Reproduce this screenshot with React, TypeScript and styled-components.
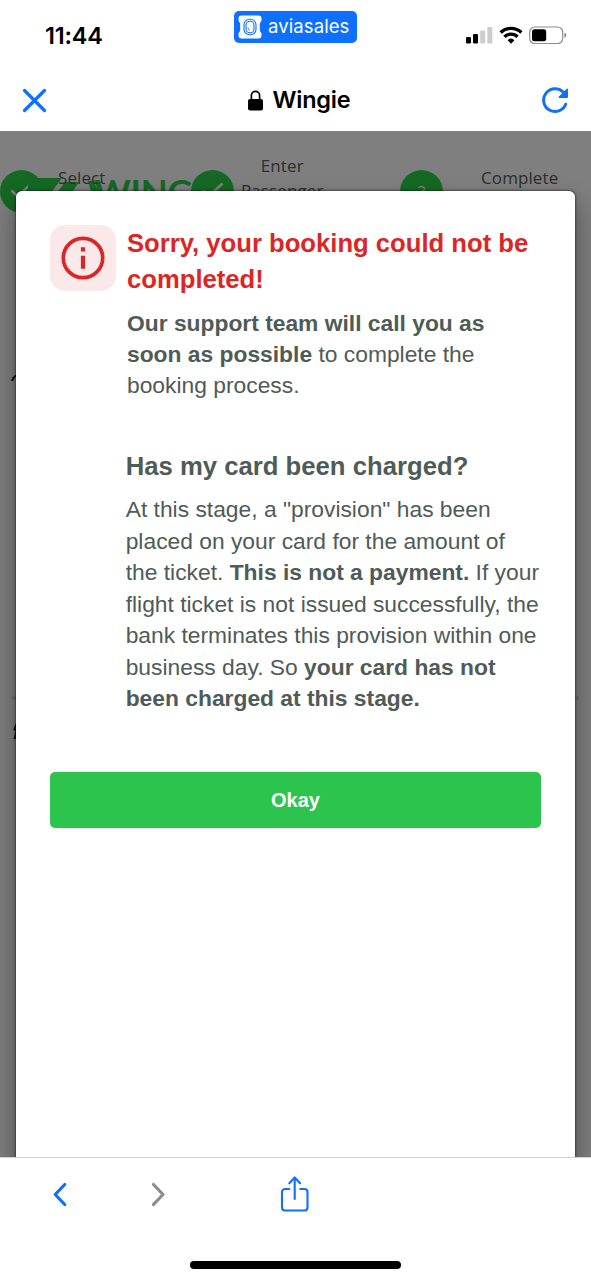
import React from 'react';
import styled, { createGlobalStyle } from 'styled-components';

const BLUE = '#0f6fff';

const GlobalStyle = createGlobalStyle`
  *, *::before, *::after { box-sizing: border-box; }
  body { margin: 0; background: #fff; }
  h1, h2, p { margin: 0; }
  button { border: 0; padding: 0; background: none; font: inherit; color: inherit; }
  svg { display: block; flex: none; }
`;

const Screen = styled.div`
  display: flex;
  flex-direction: column;
  width: 591px;
  height: 1280px;
  overflow: hidden;
  background: #fff;
  font-family: 'Liberation Sans', Arial, sans-serif;
`;

const StatusBar = styled.header`
  display: grid;
  grid-template-columns: 1fr 123px 1fr;
  height: 70px;
`;

const Clock = styled.time`
  padding: 21px 0 0 45px;
  font: 600 23.5px/29px Inter, sans-serif;
  letter-spacing: -0.2px;
  color: #000;
`;

const Badge = styled.div`
  display: flex;
  align-items: center;
  gap: 6px;
  height: 32px;
  margin-top: 11px;
  padding: 0 0 0 4px;
  border-radius: 5px;
  background: ${BLUE};
  color: #fff;
`;

const BadgeName = styled.span`
  font: 400 18.5px/24px Inter, sans-serif;
  letter-spacing: 0.1px;
  white-space: nowrap;
  margin-top: -3px;
`;

const Indicators = styled.div`
  display: flex;
  justify-content: flex-end;
  gap: 6px;
  padding: 26px 24px 0 0;
`;

const NavBar = styled.nav`
  display: flex;
  align-items: center;
  justify-content: space-between;
  height: 61px;
  padding: 0 22px 1px 22px;
`;

const NavTitle = styled.div`
  display: flex;
  align-items: center;
  gap: 9px;
  padding-left: 11px;
  font: 600 23.5px/30px Inter, sans-serif;
  letter-spacing: -0.2px;
  color: #000;
`;

const WebView = styled.main`
  position: relative;
  height: 1026px;
  overflow: hidden;
  background: #fff;
`;

const Steps = styled.div`
  display: grid;
  grid-template-columns: 191px 209px 191px;
  padding-top: 39px;
`;

const Step = styled.div<{ $gap: number; $raised?: boolean }>`
  display: flex;
  align-items: flex-start;
  gap: ${(p) => p.$gap}px;
  span {
    position: relative;
    z-index: 1;
    font: 400 17px/25px 'Open Sans', sans-serif;
    text-align: center;
    color: #5c5c5c;
    letter-spacing: 0.1px;
    margin-top: ${(p) => (p.$raised ? -17 : -5)}px;
  }
`;

const StepDot = styled.div`
  display: flex;
  align-items: center;
  justify-content: center;
  width: 43px;
  height: 43px;
  border-radius: 50%;
  background: #2bd349;
  color: #fff;
  font: 400 16px/20px 'Open Sans', sans-serif;
`;

const Brand = styled.div`
  position: absolute;
  left: 28px;
  top: 46px;
  color: #2bd349;
`;

const PageTrace = styled.svg`
  position: absolute;
  left: 0;
  top: 230px;
`;

const Backdrop = styled.div`
  position: absolute;
  z-index: 2;
  inset: 0;
  display: flex;
  padding: 60px 16px 0 16px;
  background: rgba(0, 0, 0, 0.5);
`;

const Dialog = styled.section`
  width: 559px;
  height: 1000px;
  padding: 34px 34px 0;
  border-radius: 6px;
  background: #fff;
  box-shadow: 0 0 2px 1px rgba(0, 0, 0, 0.4), 0 14px 24px 4px rgba(0, 0, 0, 0.3);
`;

const Message = styled.div`
  display: grid;
  grid-template-columns: 66px 1fr;
  column-gap: 11px;
`;

const AlertTile = styled.div`
  display: flex;
  align-items: center;
  justify-content: center;
  height: 66px;
  border-radius: 15px;
  background: #fbe9e9;
`;

const Title = styled.h1`
  padding-top: 1px;
  font-size: 25.65px;
  line-height: 35.5px;
  font-weight: 700;
  color: #dc2626;
  white-space: nowrap;
`;

const Text = styled.p`
  font-size: 22.82px;
  line-height: 31.45px;
  color: #4f5b57;
  white-space: nowrap;
`;

const Lead = styled(Text)`
  margin-top: 10.5px;
`;

const Details = styled.div`
  margin: 46.5px 0 0 75.7px;
`;

const Subtitle = styled.h2`
  margin-bottom: 10px;
  font-size: 25.7px;
  line-height: 36px;
  font-weight: 700;
  color: #4f5b57;
  white-space: nowrap;
`;

const OkayButton = styled.button`
  display: block;
  width: 491px;
  height: 56px;
  margin-top: 57px;
  border-radius: 5px;
  background: #2dc44d;
  color: #fff;
  font: 700 20px/56px 'Liberation Sans', Arial, sans-serif;
`;

const Toolbar = styled.footer`
  display: flex;
  flex-direction: column;
  align-items: center;
  justify-content: space-between;
  height: 123px;
  padding-bottom: 11px;
  border-top: 1px solid #cfcfcf;
`;

const Actions = styled.div`
  display: grid;
  grid-template-columns: 120px 76px 197px 198px;
  width: 591px;
  padding-top: 18px;
  align-items: center;
  justify-items: center;
`;

const HomeIndicator = styled.div`
  width: 211px;
  height: 8px;
  border-radius: 4px;
  background: #000;
`;

const TicketIcon = () => (
  <svg width="24" height="24" viewBox="0 0 24 24">
    <path d="M3.500.5h17a3 3 0 0 1 3 3v1.700c0 1.400-1.700 2-1.700 3.800v6c0 1.800 1.700 2.400 1.700 3.800v1.700a3 3 0 0 1-3 3h-17a3 3 0 0 1-3-3v-1.700c0-1.400 1.700-2 1.700-3.800V9c0-1.800-1.700-2.400-1.700-3.800V3.500a3 3 0 0 1 3-3z" fill="#fff" />
    <rect x="6" y="4.200" width="12" height="15.600" rx="5.500" fill="none" stroke={BLUE} strokeWidth="1.100" />
    <rect x="8" y="6.300" width="8" height="11.400" rx="3.800" fill="none" stroke={BLUE} strokeWidth="1.100" />
    <path d="M10 12.500v1.200l1.800 1.700" fill="none" stroke={BLUE} strokeWidth="1" />
  </svg>
);

const SignalIcon = () => (
  <svg width="27" height="18" viewBox="0 0 27 18">
    <rect x="0" y="11" width="5" height="6.500" rx="1.200" fill="#000" />
    <rect x="7" y="8" width="5" height="9.500" rx="1.200" fill="#000" />
    <rect x="14.200" y="4.500" width="5" height="13" rx="1.200" fill="#ccc" />
    <rect x="21.300" y="1" width="5" height="16.500" rx="1.200" fill="#ccc" />
  </svg>
);

const WifiIcon = () => (
  <svg width="24" height="18" viewBox="0 0 24 18">
    <g fill="none" stroke="#000" strokeWidth="3.300">
      <path d="M1.600 6.500a15 15 0 0 1 20.800 0" />
      <path d="M5.400 10.800a9.500 9.500 0 0 1 13.200 0" />
    </g>
    <path d="M8.600 14.200a5 5 0 0 1 6.800 0L12 17.700z" fill="#000" />
  </svg>
);

const BatteryIcon = () => (
  <svg width="38" height="19" viewBox="0 0 38 19">
    <rect x=".7" y="1" width="33" height="16.500" rx="5" fill="none" stroke="#8e8e8e" strokeWidth="1.200" />
    <rect x="3" y="3.200" width="14.200" height="12" rx="2.500" fill="#000" />
    <path d="M35.500 6.800c2.200.9 2.200 4.200 0 5z" fill="#777" />
  </svg>
);

const CloseIcon = () => (
  <svg width="25" height="25" viewBox="0 0 25 25" fill="none" stroke={BLUE} strokeWidth="3.200" strokeLinecap="round">
    <path d="M2.500 2.500l20 20M22.500 2.500l-20 20" />
  </svg>
);

const LockIcon = () => (
  <svg width="15" height="21" viewBox="0 0 15 21">
    <rect x="0" y="9" width="15" height="11.500" rx="2" fill="#000" />
    <path d="M3.400 10V5.400a4.100 4.100 0 0 1 8.200 0V10" fill="none" stroke="#000" strokeWidth="1.700" />
  </svg>
);

const ReloadIcon = () => (
  <svg width="28" height="28" viewBox="0 0 28 28">
    <path d="M24.700 18.200A11.400 11.400 0 1 1 22.600 6.600" fill="none" stroke={BLUE} strokeWidth="3" strokeLinecap="round" />
    <path d="M27 3.300v7.800q0 .9-.9.900h-7.700q-1.500-.3-.5-1.500l7.600-7.600q1.100-.9 1.500.4z" fill={BLUE} />
  </svg>
);

const CheckIcon = () => (
  <svg width="24" height="20" viewBox="0 0 24 20" fill="none" stroke="#fff" strokeWidth="2.500">
    <path d="M1.500 8.500l6 6L21.500 1.500" />
  </svg>
);

const InfoIcon = () => (
  <svg width="44" height="44" viewBox="0 0 44 44">
    <circle cx="22" cy="22" r="19.700" fill="none" stroke="#dc2626" strokeWidth="3.700" />
    <path d="M19.900 11.300h4.200v4.200h-4.200zM19.900 19.700h4.200v13h-4.200z" fill="#dc2626" />
  </svg>
);

const ChevronIcon = ({ forward }: { forward?: boolean }) => (
  <svg width="16" height="28" viewBox="0 0 16 28" fill="none" stroke={forward ? '#8c8c8c' : BLUE} strokeWidth="3.200" strokeLinecap="round" strokeLinejoin="round">
    <path d={forward ? 'M3.500 2.500L13 12.500l-9.500 10' : 'M12.700 2.500L3.200 12.500l9.500 10'} />
  </svg>
);

const ShareIcon = () => (
  <svg width="30" height="40" viewBox="0 0 30 40" fill="none" stroke={BLUE} strokeWidth="2.100" strokeLinecap="round" strokeLinejoin="round">
    <path d="M9.300 13H5a3 3 0 0 0-3 3v15.500a3 3 0 0 0 3 3h19.500a3 3 0 0 0 3-3V16a3 3 0 0 0-3-3H20.200M14.700 23V1.500M9.300 7.300L14.700 1.500l5.400 5.800" />
  </svg>
);

const BrandLogo = () => (
  <svg width="170" height="34" viewBox="0 0 170 34" fill="currentColor">
    <path d="M0 1h34L22 17H0z" />
    <path d="M37 5h14L41 20H26z" />
    <path d="M60 4h5l8 14h-9z" />
    <text x="66" y="28" fontFamily="Lato, sans-serif" fontWeight="700" fontSize="35" textLength="99">WING</text>
  </svg>
);

export default function App() {
  return (
    <>
      <GlobalStyle />
      <Screen>
        <StatusBar>
          <Clock>11:44</Clock>
          <Badge>
            <TicketIcon />
            <BadgeName>aviasales</BadgeName>
          </Badge>
          <Indicators>
            <SignalIcon />
            <WifiIcon />
            <BatteryIcon />
          </Indicators>
        </StatusBar>
        <NavBar>
          <button aria-label="Close"><CloseIcon /></button>
          <NavTitle><LockIcon />Wingie</NavTitle>
          <button aria-label="Reload"><ReloadIcon /></button>
        </NavBar>
        <WebView>
          <Steps>
            <Step $gap={15}><StepDot><CheckIcon /></StepDot><span>Select</span></Step>
            <Step $gap={7} $raised><StepDot><CheckIcon /></StepDot><span>Enter<br />Passenger</span></Step>
            <Step $gap={38}><StepDot>3</StepDot><span>Complete</span></Step>
          </Steps>
          <Brand><BrandLogo /></Brand>
          <PageTrace width="591" height="390" fill="none">
            <path d="M12 20q2-6 8-7" stroke="#222" strokeWidth="2" />
            <path d="M12 337h567" stroke="#dadada" strokeWidth="3" />
            <path d="M18 361l-3 7 2 2-2 8" stroke="#112" strokeWidth="3" />
          </PageTrace>
          <Backdrop>
            <Dialog role="dialog">
              <Message>
                <AlertTile><InfoIcon /></AlertTile>
                <div>
                  <Title>Sorry, your booking could not be<br />completed!</Title>
                  <Lead>
                    <b>Our support team will call you as<br />soon as possible</b> to complete the<br />booking process.
                  </Lead>
                </div>
              </Message>
              <Details>
                <Subtitle>Has my card been charged?</Subtitle>
                <Text>
                  At this stage, a "provision" has been<br />
                  placed on your card for the amount of<br />
                  the ticket. <b>This is not a payment.</b> If your<br />
                  flight ticket is not issued successfully, the<br />
                  bank terminates this provision within one<br />
                  business day. So <b>your card has not<br />
                  been charged at this stage.</b>
                </Text>
              </Details>
              <OkayButton>Okay</OkayButton>
            </Dialog>
          </Backdrop>
        </WebView>
        <Toolbar>
          <Actions>
            <button aria-label="Back"><ChevronIcon /></button>
            <button aria-label="Forward"><ChevronIcon forward /></button>
            <button aria-label="Share"><ShareIcon /></button>
          </Actions>
          <HomeIndicator />
        </Toolbar>
      </Screen>
    </>
  );
}
